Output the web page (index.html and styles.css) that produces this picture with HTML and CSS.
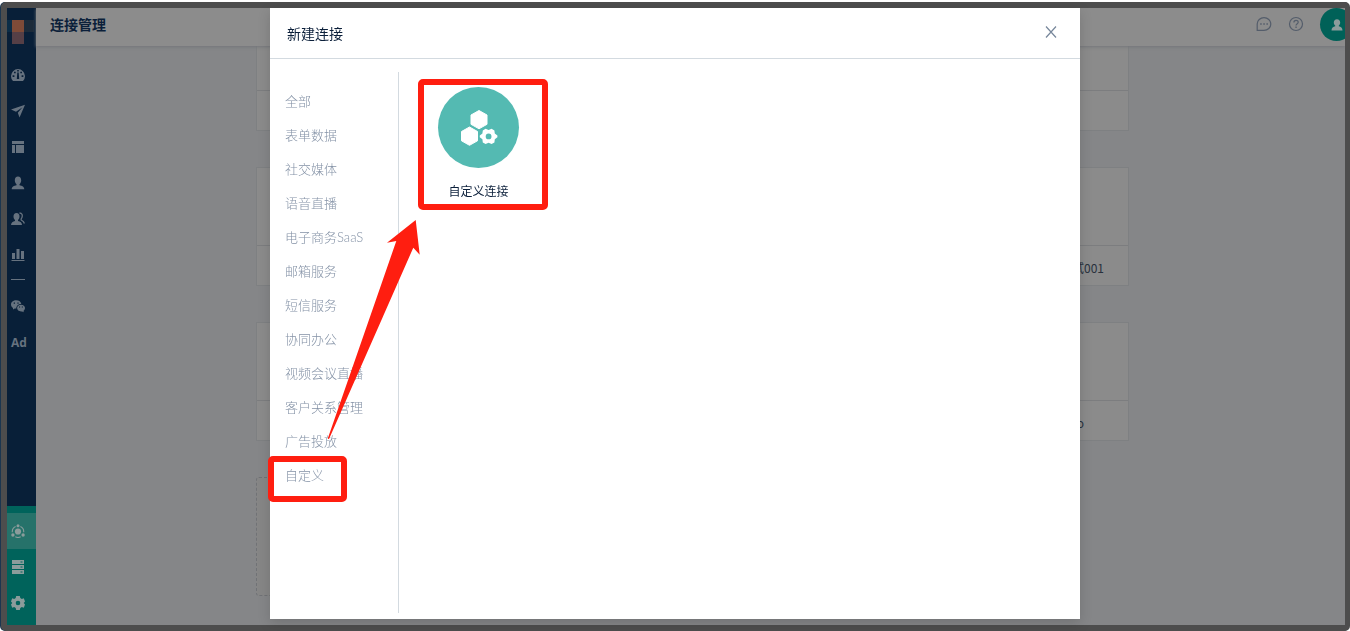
FILE: index.html
```html
<!DOCTYPE html>
<html lang="zh-CN">
<head>
<meta charset="utf-8">
<title>连接管理</title>
<link rel="stylesheet" href="styles.css">
</head>
<body>
<div class="frame">
  <nav class="rail" aria-label="主导航">
    <div class="logo"><svg width="29" height="36" viewBox="0 0 29 36"><path fill="#1c2b3a" d="M0 12h27v12H0z"/><path fill="#0b2d47" d="M0 12h5v12H0z"/><path fill="#7e4b38" d="M5 12h12v12H5z"/><path fill="#553f46" d="M5 24h12v12H5z"/></svg></div>
    <a class="rail-item" href="#" aria-label="仪表盘"><svg viewBox="0 0 14 14"><path fill="currentColor" fill-rule="evenodd" d="M2 13a7 7 0 1 1 10 0zM6.300 4.500 5.800 11h2.400l-.5-6.500zM6.200 2h1.600v1.500H6.200zM3 3.700h1.700v1.600H3zm6.300 0H11v1.600H9.300zM1.600 7.300h1.800v1.600H1.600zm9 0h1.800v1.600h-1.800z"/></svg></a>
    <a class="rail-item" href="#" aria-label="发送"><svg viewBox="0 0 14 14"><path fill="currentColor" d="M0 5.500 14 .8 8.500 13.500 6.800 8.800 11.500 3.300 5 7.800z"/></svg></a>
    <a class="rail-item" href="#" aria-label="页面"><svg viewBox="0 0 14 14"><path fill="currentColor" d="M1 1h12v3H1zM1 5h3v8H1zM5 5h8v8H5z"/></svg></a>
    <a class="rail-item" href="#" aria-label="用户"><svg viewBox="0 0 14 14"><path fill="currentColor" d="M7 .5c2 0 3.200 1.600 3.200 3.700 0 1.700-.7 3.200-1.700 4v1c2.500.6 4.800 1.500 4.800 4.100H.7c0-2.600 2.300-3.500 4.800-4.100v-1c-1-.8-1.700-2.300-1.700-4C3.800 2.100 5 .5 7 .5z"/></svg></a>
    <a class="rail-item" href="#" aria-label="群组"><svg viewBox="0 0 14 14"><path fill="currentColor" d="M5.500 1c2 0 3 1.500 3 3.500 0 1.500-.6 2.800-1.500 3.500v1c2.300.6 4 1.500 4 4H0c0-2.500 2-3.400 4-4V8c-.9-.7-1.500-2-1.500-3.500C2.500 2.500 3.500 1 5.500 1z"/><path fill="none" stroke="currentColor" stroke-width="1.300" d="M8.500 1c2.500 0 3.200 2 2.500 4.200-.8 2-1.500 2.300-.5 3C12 9 13 9.700 13.400 11.500"/></svg></a>
    <a class="rail-item" href="#" aria-label="统计"><svg viewBox="0 0 14 14"><path fill="currentColor" d="M1 5h3v6H1zM5.500 1h3v10h-3zM10 3h3v8h-3zM.5 12h13v1H.5z"/></svg></a>
    <div class="rail-line"></div>
    <a class="rail-item" href="#" aria-label="微信"><svg viewBox="0 0 14 14"><path fill="currentColor" fill-rule="evenodd" d="M5.200 1.200C8 1.200 10 2.800 10.300 5 7.300 5 5.200 6.800 5.300 9.600L3.800 9.500 2 10.600V8.900C.8 8 0 7 0 5.500c0-2.500 2.300-4.300 5.200-4.300zM2.700 3.500v1.200H4V3.500zm3.700 0v1.200h1.200V3.500z"/><path fill="currentColor" fill-rule="evenodd" d="M10 5.700c2.300 0 4 1.500 4 3.400 0 1.200-.6 2-1.400 2.700v1.500l-1.500-.9c-2.900.5-5-1.200-5-3.300 0-1.900 1.700-3.400 3.900-3.400zM8 7.500v1.100h1.100V7.500zm2.800 0v1.100h1.100V7.500z"/></svg></a>
    <a class="rail-item rail-text" href="#">Ad</a>
    <div class="rail-bottom">
      <a class="rail-item active" href="#" aria-label="连接"><svg viewBox="0 0 14 14"><g fill="currentColor"><circle cx="7" cy="7.500" r="3.100"/><circle cx="7" cy="1.700" r="1.500"/><circle cx="1.900" cy="11" r="1.700"/><circle cx="12.100" cy="11" r="1.700"/></g><path fill="none" stroke="currentColor" stroke-width="1.100" d="M1.300 8.200A5.800 5.800 0 0 1 4.600 2.500M9.400 2.500a5.800 5.800 0 0 1 3.300 5.700M4.300 12.800a6 6 0 0 0 5.400 0"/></svg></a>
      <a class="rail-item" href="#" aria-label="数据"><svg viewBox="0 0 14 14"><path fill="currentColor" fill-rule="evenodd" d="M1 0h12v4H1zM1 5h12v4H1zM1 10h12v4H1zM9.500 1.500v1h2v-1zm0 5v1h2v-1zm0 5v1h2v-1z"/></svg></a>
      <a class="rail-item" href="#" aria-label="设置"><svg viewBox="0 0 14 14"><path fill="currentColor" fill-rule="evenodd" d="M5.200 0h3.600l.5 2 1.500.9 2-.6L14 5.500 12.700 7 14 8.500l-1.200 3.200-2-.6-1.500.9-.5 2H5.200l-.5-2-1.500-.9-2 .6L0 8.500 1.300 7 0 5.500l1.200-3.200 2 .6L4.700 2zM7 4.700a2.300 2.300 0 1 0 0 4.600 2.300 2.300 0 0 0 0-4.600z"/></svg></a>
    </div>
  </nav>

  <div class="main">
    <header class="topbar">
      <h1 class="page-title">连接管理</h1>
      <button class="icon-button" aria-label="消息"><svg width="16" height="16" viewBox="0 0 16 16"><path fill="none" stroke="currentColor" stroke-width="1.200" d="M1.200 14.400V8a6.800 6.400 0 1 1 6.800 6.400z"/><path fill="currentColor" d="M4.200 7.300h1.500v1.400H4.200zm3.100 0h1.500v1.400H7.300zm3.100 0h1.500v1.400h-1.500z"/></svg></button>
      <button class="icon-button" aria-label="帮助"><svg width="16" height="16" viewBox="0 0 16 16"><g fill="none" stroke="currentColor" stroke-width="1.200"><circle cx="8" cy="8" r="6.500"/><path d="M5.900 6.500C5.900 3.500 10.200 3.700 10.200 6.200 10.200 7.700 8 7.700 8 9.600"/></g><path fill="currentColor" d="M7.400 10.600h1.300v1.300H7.400z"/></svg></button>
      <button class="avatar" aria-label="账户"><svg width="12" height="12" viewBox="0 0 12 12"><path fill="currentColor" d="M6 .3c2 0 3.200 1.300 3.200 3.200 0 1.300-.6 2.400-1.400 3v.7c2 .4 3.700 1.500 3.700 4.300H.5c0-2.800 1.700-3.900 3.700-4.300v-.7c-.8-.6-1.400-1.700-1.400-3C2.800 1.600 4 .3 6 .3z"/></svg></button>
    </header>
    <div class="cards">
      <article class="card"><div class="card-body"></div><div class="card-foot"></div></article>
      <article class="card"><div class="card-body"></div><div class="card-foot">试001</div></article>
      <article class="card"><div class="card-body"></div><div class="card-foot short">o</div></article>
      <article class="card card-new"></article>
    </div>
  </div>
</div>

<div class="overlay">
  <section class="modal" role="dialog" aria-labelledby="dialog-title">
    <header class="modal-head">
      <h2 id="dialog-title" class="modal-title">新建连接</h2>
      <button class="close" aria-label="关闭"><svg width="12" height="12" viewBox="0 0 12 12"><path fill="none" stroke="currentColor" stroke-width="1.200" d="M1 .5l10 11M11 .5l-10 11"/></svg></button>
    </header>
    <div class="modal-body">
      <nav class="categories" aria-label="分类">
        <a href="#">全部</a>
        <a href="#">表单数据</a>
        <a href="#">社交媒体</a>
        <a href="#">语音直播</a>
        <a href="#">电子商务SaaS</a>
        <a href="#">邮箱服务</a>
        <a href="#">短信服务</a>
        <a href="#">协同办公</a>
        <a href="#">视频会议直播</a>
        <a href="#">客户关系管理</a>
        <a href="#">广告投放</a>
        <a class="marked" href="#">自定义</a>
      </nav>
      <div class="connectors">
        <button class="connector">
          <span class="connector-icon"><svg width="38" height="38" viewBox="0 0 38 38"><g fill="#fff" stroke="#fff" stroke-linejoin="round"><path d="M19 1.500 27 6v9.300l-8 4.500-8-4.500V6z"/><path d="M9.500 18l8 4.500v9.300l-8 4.500-8-4.500v-9.300z"/></g><path fill="#fff" fill-rule="evenodd" d="M25.600 19.800l3 1.200 3-1.200 2.800 1.600.4 3.200 2.600 2v1.600l-2.600 2-.4 3.200-2.800 1.600-3-1.200-3 1.200-2.800-1.600-.4-3.200-2.600-2v-1.600l2.600-2 .4-3.200zM28.600 24.500a2.900 2.900 0 1 0 0 5.800 2.900 2.900 0 0 0 0-5.800z"/></svg></span>
          <span>自定义连接</span>
        </button>
      </div>
    </div>
    <svg class="arrow" width="94" height="220" viewBox="0 0 94 220"><path fill="#ff1e10" d="M88.700 0 60 22.700 69.300 21 .7 218.700 2 219 86.300 27.700 92.700 34.700z"/></svg>
  </section>
</div>
</body>
</html>
```
FILE: styles.css
```css
* {
  box-sizing: border-box;
}

body {
  display: flex;
  margin: 0;
  height: 100vh;
  padding: 2px 0 0 1px;
  background: #fff;
  font-family: "Noto Sans CJK SC", sans-serif;
  font-size: 13px;
  color: #0b1f3a;
}

a {
  color: inherit;
  text-decoration: none;
}

button {
  padding: 0;
  border: 0;
  background: none;
  font: inherit;
  color: inherit;
}

svg {
  display: block;
}

.frame {
  display: flex;
  flex: 1;
  overflow: hidden;
  border: 6px solid #4d4d4d;
  border-right-width: 5px;
  border-radius: 5px;
  background: #858688;
  box-shadow: -1px 0 0 #1b3650;
}

.rail {
  display: flex;
  flex-direction: column;
  flex: none;
  width: 29px;
  background: #081f38;
  color: #66727f;
}

.logo {
  height: 49px;
}

.rail-item {
  display: flex;
  align-items: center;
  height: 36px;
  padding-left: 4px;
}

.rail-item svg {
  width: 14px;
  height: 14px;
}

.rail-text {
  font: bold 12px "Open Sans", sans-serif;
}

.rail-line {
  height: 1px;
  margin: 6px 11px 8px 4px;
  background: #66727f;
}

.rail-bottom {
  margin-top: auto;
  padding: 7px 0 4px;
  background: #00635b;
  color: #8b9c9b;
}

.active {
  background: #26726a;
}

.main {
  display: flex;
  flex: 1;
  flex-direction: column;
  min-width: 0;
}

.topbar {
  display: flex;
  flex: none;
  gap: 16px;
  height: 38px;
  padding-left: 14px;
  background: #8c8c8c;
  box-shadow: 0 1px 3px #74767a;
  z-index: 1;
}

.page-title {
  flex: 1;
  margin: 0;
  font-size: 14px;
  font-weight: 700;
  line-height: 32px;
}

.icon-button {
  display: flex;
  align-items: center;
  height: 32px;
  color: #545d6b;
}

.avatar {
  display: flex;
  flex: none;
  align-items: center;
  justify-content: center;
  width: 33px;
  height: 33px;
  margin-right: -8px;
  border-radius: 50%;
  background: #006158;
  color: #8c9c9b;
}

.cards {
  display: flex;
  flex: 1;
  flex-direction: column;
  justify-content: flex-end;
  gap: 36px;
  min-height: 0;
  padding: 0 216px 29px 220px;
  overflow: hidden;
}

.card {
  display: flex;
  flex: none;
  flex-direction: column;
  height: 119px;
  border: 1px solid #7e8082;
  background: #8b8b8b;
}

.card-body {
  flex: 1;
}

.card-foot {
  height: 40px;
  padding-right: 24px;
  border-top: 1px solid #7c7d7f;
  font-size: 12px;
  line-height: 44px;
  text-align: right;
  color: #28313d;
}

.short {
  padding-right: 44px;
}

.card-new {
  width: 30%;
  border: 1px dashed #707276;
  border-radius: 3px;
  background: #868686;
}

.overlay {
  position: fixed;
  inset: 0;
  z-index: 2;
  display: flex;
  justify-content: center;
  padding: 8px 0 12px;
}

.modal {
  position: relative;
  display: flex;
  flex-direction: column;
  width: 60%;
  background: #fff;
  box-shadow: 0 4px 12px rgba(0, 0, 0, 0.15);
}

.modal-head {
  display: flex;
  justify-content: space-between;
  height: 51px;
  padding: 0 23px 0 17px;
  border-bottom: 1px solid #d3dae0;
}

.modal-title {
  margin: 0;
  font-size: 14px;
  font-weight: 400;
  line-height: 50px;
}

.close {
  height: 48px;
  color: #76869a;
}

.modal-body {
  display: flex;
  flex: 1;
  padding: 13px 0 6px;
}

.categories {
  flex: none;
  width: 129px;
  padding: 12px 0 0 15px;
  border-right: 1px solid #d3dae0;
  font-family: Lato, "Noto Sans CJK SC", sans-serif;
  font-weight: 300;
  line-height: 34px;
  color: #8492a6;
}

.categories a {
  display: block;
}

.connectors {
  padding: 15px 39px;
}

.connector {
  position: relative;
  display: flex;
  flex-direction: column;
  align-items: center;
  gap: 14px;
  width: 81px;
  font-size: 12px;
  line-height: 18px;
}

.connector-icon {
  display: flex;
  align-items: center;
  justify-content: center;
  width: 81px;
  height: 81px;
  border-radius: 50%;
  background: #54bab2;
}

.marked {
  position: relative;
}

.connector::after,
.marked::after {
  content: "";
  position: absolute;
  border: 6px solid #ff1e10;
  border-radius: 5px;
}

.connector::after {
  inset: -8px -29px -10px -20px;
}

.marked::after {
  inset: -2px 51px -10px -17px;
}

.arrow {
  position: absolute;
  top: 212px;
  left: 57px;
}
```
